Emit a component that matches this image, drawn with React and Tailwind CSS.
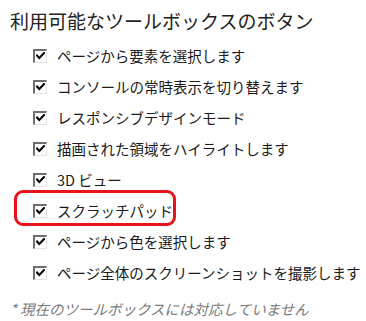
import React from "react";

const items = [
  "ページから要素を選択します",
  "コンソールの常時表示を切り替えます",
  "レスポンシブデザインモード",
  "描画された領域をハイライトします",
  "3D ビュー",
  "スクラッチパッド",
  "ページから色を選択します",
  "ページ全体のスクリーンショットを撮影します",
];

function Check() {
  return (
    <span className="flex w-[14px] h-[14px] shrink-0 border-t-[2px] border-l-[2px] border-t-[#6e6e6e] border-l-[#6e6e6e] border-b border-r border-b-[#e2e2e2] border-r-[#e2e2e2] bg-white items-center justify-center">
      <svg width="9" height="8" viewBox="0 0 9 8">
        <path d="M1 3.5 L3.3 6 L8 1" stroke="#000" strokeWidth="2" fill="none" strokeLinecap="square" />
      </svg>
    </span>
  );
}

export default function App() {
  return (
    <div
      className="w-[366px] h-[321px] bg-white pl-[10px] pt-[8px] text-[#1a1a1a]"
      style={{ fontFamily: '"Noto Sans CJK JP", "Noto Sans", sans-serif' }}
    >
      <div className="text-[19px] leading-[26px] text-[#222]">利用可能なツールボックスのボタン</div>
      <div className="flex flex-col mt-[6px] pl-[23px]">
        {items.map((t, i) => (
          <div key={i} className="relative flex items-center h-[31px] gap-[10px]">
            <Check />
            <span className="text-[14.5px] leading-[20px] whitespace-nowrap">{t}</span>
            {i === 5 && (
              <span className="absolute left-[-19px] top-[-5px] w-[162px] h-[36px] border-[3px] border-[#e8141c] rounded-[9px]" />
            )}
          </div>
        ))}
      </div>
      <div className="mt-[11px] text-[14.5px] leading-[20px] italic text-[#7a7a7a] whitespace-nowrap">
        * 現在のツールボックスには対応していません
      </div>
    </div>
  );
}
